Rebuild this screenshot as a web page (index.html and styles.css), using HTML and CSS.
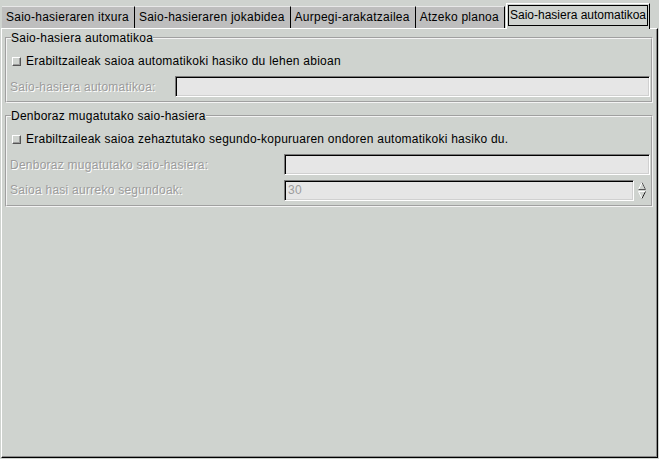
FILE: index.html
```html
<!DOCTYPE html>
<html>
<head>
<meta charset="utf-8">
<link rel="stylesheet" href="styles.css">
</head>
<body>
<div class="window">
  <div class="tabs">
    <div class="tab">Saio-hasieraren itxura</div>
    <div class="tab">Saio-hasieraren jokabidea</div>
    <div class="tab">Aurpegi-arakatzailea</div>
    <div class="tab">Atzeko planoa</div>
    <div class="tab active"><span class="focus">Saio-hasiera automatikoa</span></div>
  </div>
  <div class="page">
    <fieldset class="frame">
      <legend>Saio-hasiera automatikoa</legend>
      <div class="check"><span class="box"></span>Erabiltzaileak saioa automatikoki hasiko du lehen abioan</div>
      <div class="row row1">
        <span class="label">Saio-hasiera automatikoa:</span>
        <span class="entry"></span>
      </div>
    </fieldset>
    <fieldset class="frame">
      <legend>Denboraz mugatutako saio-hasiera</legend>
      <div class="check"><span class="box"></span>Erabiltzaileak saioa zehaztutako segundo-kopuruaren ondoren automatikoki hasiko du.</div>
      <div class="row row2">
        <span class="label">Denboraz mugatutako saio-hasiera:</span>
        <span class="entry"></span>
      </div>
      <div class="row row2 spinrow">
        <span class="label">Saioa hasi aurreko segundoak:</span>
        <span class="entry value">30</span>
        <span class="spin">
          <svg width="16" height="22" viewBox="0 0 16 22">
            <path d="M4.5 10.5 L8 3.5 L11.5 10.5 Z" fill="none" stroke="#fff" stroke-width="1"/>
            <path d="M8 3.5 L11.5 10.5 L4.5 10.5" fill="none" stroke="#555" stroke-width="1"/>
            <path d="M4.5 12.5 L11.5 12.5 L8 19.5 Z" fill="none" stroke="#fff" stroke-width="1"/>
            <path d="M11.5 12.5 L8 19.5" fill="none" stroke="#222" stroke-width="1"/>
          </svg>
        </span>
      </div>
    </fieldset>
  </div>
</div>
</body>
</html>
```
FILE: styles.css
```css
html, body {
  margin: 0;
  padding: 0;
  background: #cfd3cf;
}
body {
  font-family: "Liberation Sans", Arial, sans-serif;
  font-size: 12px;
  letter-spacing: 0.25px;
  color: #000;
  width: 659px;
  height: 459px;
  overflow: hidden;
}
.window {
  display: flex;
  flex-direction: column;
  height: 459px;
}
.tabs {
  display: flex;
  align-items: flex-end;
  height: 28px;
  padding-left: 2px;
}
.tab {
  height: 22px;
  box-sizing: border-box;
  padding: 0 5px 0 4px;
  background: #bebebe;
  border-top: 1px solid #e8e8e8;
  border-right: 1px solid #000;
  line-height: 21px;
  white-space: nowrap;
}
.tab.active {
  height: 26px;
  margin-left: 1px;
  padding: 1px 1px 0 1px;
  background: #cfd3cf;
  border-top: 1px solid #fff;
  border-left: 1px solid #fff;
  border-right: 1px solid #000;
  margin-bottom: -1px;
  position: relative;
  z-index: 1;
}
.focus {
  display: block;
  border: 1px solid #000;
  line-height: 19px;
  padding: 0 1px 0 1px;
  letter-spacing: 0;
}
.page {
  flex: 1;
  border-top: 1px solid #fff;
  border-left: 1px solid #fff;
  border-right: 1px solid #000;
  border-bottom: 1px solid #000;
  box-shadow: inset -1px -1px 0 #8a8a8a;
  margin: 0 1px 1px 1px;
  padding: 2px 4px 0 3px;
}
.frame {
  margin: 0 0 6px 0;
  padding: 5px 1px 4px 3px;
  border: 2px groove #f4f4f4;
}
.frame legend {
  padding: 0;
  margin-left: 1px;
  line-height: 14px;
}
.check {
  display: flex;
  align-items: center;
  height: 22px;
  white-space: nowrap;
}
.box {
  width: 7px;
  height: 7px;
  margin: 0 5px 0 2px;
  background: #cfd3cf;
  border-top: 1px solid #fff;
  border-left: 1px solid #fff;
  border-right: 1px solid #555;
  border-bottom: 1px solid #555;
  box-shadow: inset -1px -1px 0 #9a9a9a;
}
.row {
  display: grid;
  align-items: center;
  margin-top: 3px;
}
.row1 {
  grid-template-columns: 165px 1fr;
  margin-top: 4px;
}
.row2 {
  grid-template-columns: 274px 1fr;
  margin-top: 4px;
}
.spinrow {
  grid-template-columns: 274px 1fr 16px;
  margin-top: 4px;
}
.label {
  color: #9c9c9c;
  text-shadow: 1px 1px 0 #fff;
  white-space: nowrap;
}
.entry {
  display: block;
  height: 21px;
  box-sizing: border-box;
  background: #e6e6e6;
  border-top: 1px solid #7a7a7a;
  border-left: 1px solid #7a7a7a;
  border-right: 1px solid #fff;
  border-bottom: 1px solid #fff;
  box-shadow: inset 1px 1px 0 #000, inset -1px -1px 0 #d0d0d0;
}
.value {
  color: #9c9c9c;
  padding-left: 3px;
  line-height: 19px;
}
.spin {
  display: block;
  height: 22px;
}
.spin svg {
  display: block;
}
```
